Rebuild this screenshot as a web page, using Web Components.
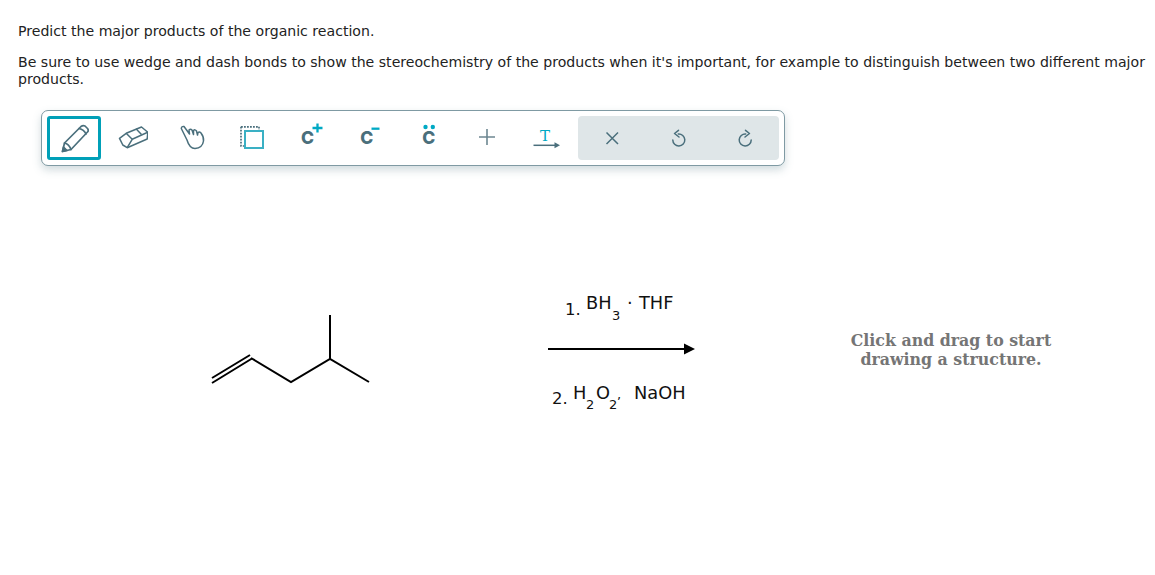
<!DOCTYPE html>
<html>
<head>
<meta charset="utf-8">
<style>
    html, body { margin: 0; background: #fff; }
    body { width: 1155px; height: 575px; overflow: hidden; font-family: "DejaVu Sans", Verdana, sans-serif; }
</style>
</head>
<body>
<question-page>
    <question-prompt>
        <p>Predict the major products of the organic reaction.</p>
        <p>Be sure to use wedge and dash bonds to show the stereochemistry of the products when it's important, for example to distinguish between two different major products.</p>
    </question-prompt>
    <sketch-toolbar>
        <tool-button slot="tools" selected>
            <svg width="30" height="30" viewBox="0 0 30 30" fill="none" stroke="#4a6f7c" stroke-width="1.7" stroke-linejoin="round" stroke-linecap="round">
                <path d="M3.500 28.500 L5.500 20 L22 3.500 Q24 2 26 3 L28.500 5.500 Q30 7.500 28.500 9 L12 26.500 Z"/>
                <path d="M5.500 20 Q10 21 12 26.500"/><path d="M20 5.500 Q25 6.500 27 11"/>
                <path d="M3.500 28.500 L4.500 24 L8 27.500 Z" fill="#4a6f7c"/>
            </svg>
        </tool-button>
        <tool-button slot="tools">
            <svg width="30" height="30" viewBox="0 0 30 30" fill="none" stroke="#4a6f7c" stroke-width="1.500" stroke-linejoin="round">
                <path d="M1.500 15.300 L8.200 10.300 L23.500 4 L29.800 9.300 L29.200 16 L9.200 24.700 L4.800 22 Z"/>
                <path d="M8.200 10.300 L14.200 16.300 L9.200 24.700"/><path d="M14.200 16.300 L29.800 9.300"/>
                <path d="M18 5.800 L23.500 11.500"/>
            </svg>
        </tool-button>
        <tool-button slot="tools">
            <svg width="30" height="30" viewBox="0 0 30 30" fill="none" stroke="#4a6f7c" stroke-width="1.500" stroke-linejoin="round" stroke-linecap="round">
                <path d="M10 17 L4.300 5.500 Q4.500 3 7 3.500 L12.500 11 L12 7 Q13.500 5.500 15 7 L16.500 11.500 L16.500 7.500 Q18 6 19.500 8 L20.500 12 L21 9.500 Q22.500 8.500 24 10 Q27 14 26.500 18 Q25.500 25 18 25.500 Q12.500 25.500 10 17 Z"/>
            </svg>
        </tool-button>
        <tool-button slot="tools">
            <svg width="30" height="30" viewBox="0 0 30 30" fill="none">
                <path d="M5 3.800 H23 V8 M5 3.800 V23 H9" stroke="#4a6f7c" stroke-width="1.700" stroke-dasharray="1.800 1.200"/>
                <rect x="9" y="8" width="18" height="17" stroke="#3ab0c4" stroke-width="2"/>
            </svg>
        </tool-button>
        <tool-button slot="tools"><atom-glyph charge="plus"></atom-glyph></tool-button>
        <tool-button slot="tools"><atom-glyph charge="minus"></atom-glyph></tool-button>
        <tool-button slot="tools"><atom-glyph charge="pair"></atom-glyph></tool-button>
        <tool-button slot="tools">
            <svg width="30" height="30" viewBox="0 0 30 30" fill="none" stroke="#6d8791" stroke-width="1.600"><path d="M15 6 V22 M7 14 H23"/></svg>
        </tool-button>
        <tool-button slot="tools">
            <svg width="30" height="30" viewBox="0 0 30 30" fill="none">
                <text x="14" y="18" text-anchor="middle" font-family="'DejaVu Serif', serif" font-size="15" fill="#00a9c4">T</text>
                <path d="M2.500 22.300 H25" stroke="#4a6f7c" stroke-width="1.500"/>
                <path d="M23.500 19.300 L29 22.300 L23.500 25.300 Z" fill="#4a6f7c"/>
            </svg>
        </tool-button>
        <tool-button slot="actions">
            <svg width="30" height="30" viewBox="0 0 30 30" fill="none" stroke="#4a6f7c" stroke-width="1.500"><path d="M9.500 9.500 L21 21 M21 9.500 L9.500 21"/></svg>
        </tool-button>
        <tool-button slot="actions">
            <svg width="30" height="30" viewBox="0 0 30 30" fill="none" stroke="#4a6f7c" stroke-width="1.500" stroke-linecap="round" stroke-linejoin="round"><path d="M15.300 11 A6 6 0 1 1 9.800 17"/><path d="M15.500 7.300 L11.500 10.500 L16 14"/></svg>
        </tool-button>
        <tool-button slot="actions">
            <svg width="30" height="30" viewBox="0 0 30 30" fill="none" stroke="#4a6f7c" stroke-width="1.500" stroke-linecap="round" stroke-linejoin="round"><path d="M15.700 11 A6 6 0 1 0 21.200 17"/><path d="M15.500 7.300 L19.500 10.500 L15 14"/></svg>
        </tool-button>
    </sketch-toolbar>
    <reaction-canvas></reaction-canvas>
</question-page>

<script>
class QuestionPage extends HTMLElement {
    constructor() {
        super();
        this.attachShadow({ mode: 'open' });
    }

    connectedCallback() {
        this.shadowRoot.innerHTML = `
            <style>
                :host {
                    display: flex;
                    flex-direction: column;
                    color: #1f2a30;
                }
            </style>
            <slot></slot>
        `;
    }
}

class QuestionPrompt extends HTMLElement {
    constructor() {
        super();
        this.attachShadow({ mode: 'open' });
    }

    connectedCallback() {
        this.shadowRoot.innerHTML = `
            <style>
                :host {
                    display: block;
                    padding: 23px 0 0 18px;
                    width: 1130px;
                    font-size: 14.1px;
                    line-height: 17px;
                    color: #222;
                }
                ::slotted(p) {
                    margin: 0 0 14px 0;
                }
            </style>
            <slot></slot>
        `;
    }
}

class SketchToolbar extends HTMLElement {
    constructor() {
        super();
        this.attachShadow({ mode: 'open' });
    }

    connectedCallback() {
        this.shadowRoot.innerHTML = `
            <style>
                :host {
                    display: flex;
                    box-sizing: border-box;
                    width: 744px;
                    height: 56px;
                    margin: 8px 0 0 41px;
                    padding: 5px;
                    background: #fff;
                    border: 1px solid #7f9aa3;
                    border-radius: 7px;
                    box-shadow: 0 4px 8px rgba(90, 125, 135, 0.28);
                    justify-content: space-between;
                }
                .tools { display: flex; }
                .actions {
                    display: flex;
                    background: #dfe6e8;
                    border-radius: 4px;
                    width: 201px;
                    justify-content: space-around;
                    padding: 0 0.5px;
                    box-sizing: border-box;
                }
            </style>
            <div class="tools"><slot name="tools"></slot></div>
            <div class="actions"><slot name="actions"></slot></div>
        `;
    }
}

class ToolButton extends HTMLElement {
    constructor() {
        super();
        this.attachShadow({ mode: 'open' });
    }

    connectedCallback() {
        this.shadowRoot.innerHTML = `
            <style>
                :host {
                    display: flex;
                    align-items: center;
                    justify-content: center;
                    box-sizing: border-box;
                    width: 59px;
                    height: 44px;
                }
                :host([selected]) {
                    width: 54px;
                    margin-right: 2px;
                    border: 3px solid #00a0b8;
                    border-radius: 3px;
                }
                :host([slot="actions"]) {
                    width: 66px;
                }
                svg { display: block; }
            </style>
            <slot></slot>
        `;
    }
}

class AtomGlyph extends HTMLElement {
    constructor() {
        super();
        this.attachShadow({ mode: 'open' });
    }

    connectedCallback() {
        const charge = this.getAttribute('charge');
        const marks = {
            plus: '<path d="M17.500 5 H27.500 M22.500 0.500 V9.500" stroke="#00a9c4" stroke-width="2.300"/>',
            minus: '<path d="M17.500 5.700 H25.500" stroke="#00a9c4" stroke-width="2.300"/>',
            pair: '<circle cx="12.500" cy="4" r="2.200" fill="#00a9c4"/><circle cx="19.800" cy="4" r="2.200" fill="#00a9c4"/>'
        };
        const x = { plus: 12.4, minus: 12.7, pair: 15.8 }[charge];
        this.shadowRoot.innerHTML = `
            <style>
                :host { display: block; width: 30px; height: 30px; }
                svg { display: block; }
                text { font-family: Inter, "DejaVu Sans", sans-serif; font-weight: 800; font-size: 17.500px; fill: #4a6f7c; }
            </style>
            <svg width="30" height="30" viewBox="0 0 30 30" fill="none">
                <text x="${x}" y="21" text-anchor="middle">C</text>
                ${marks[charge]}
            </svg>
        `;
    }
}

class ReactionCanvas extends HTMLElement {
    constructor() {
        super();
        this.attachShadow({ mode: 'open' });
    }

    connectedCallback() {
        this.shadowRoot.innerHTML = `
            <style>
                :host {
                    display: block;
                    position: relative;
                    width: 1155px;
                    height: 409px;
                }
                svg { position: absolute; left: 0; top: 0; }
                text { font-family: "DejaVu Sans", Verdana, sans-serif; fill: #111; }
                .hint {
                    position: absolute;
                    left: 820px;
                    top: 165px;
                    width: 262px;
                    text-align: center;
                    font-family: "DejaVu Serif", "DejaVu Sans", serif;
                    font-weight: bold;
                    font-size: 15.800px;
                    line-height: 19px;
                    color: #757575;
                }
            </style>
            <svg width="1155" height="409" viewBox="0 166 1155 409" fill="none">
                <g stroke="#000" stroke-width="2">
                    <path d="M212 383 L252 358.500 M212 378 L250 355"/>
                    <path d="M251 358 L291 382 L330 359 L369 382 M330 359 V315"/>
                    <path d="M548 349 H685"/>
                </g>
                <path d="M684 343.500 L695 349 L684 354.500 Z" fill="#000"/>
                <text x="565" y="315" font-size="16.500">1.</text>
                <text x="586" y="309" font-size="17.800">BH</text>
                <text x="612" y="320" font-size="13">3</text>
                <text x="627" y="309" font-size="17.800">·</text>
                <text x="639" y="309" font-size="17.800">THF</text>
                <text x="552" y="404" font-size="16.500">2.</text>
                <text x="573" y="399" font-size="17.800">H</text>
                <text x="586" y="409" font-size="13">2</text>
                <text x="596" y="399" font-size="17.800">O</text>
                <text x="609" y="409" font-size="13">2</text>
                <text x="617" y="399" font-size="13">,</text>
                <text x="634" y="399" font-size="17.800">NaOH</text>
            </svg>
            <div class="hint">Click and drag to start<br>drawing a structure.</div>
        `;
    }
}

customElements.define('question-page', QuestionPage);
customElements.define('question-prompt', QuestionPrompt);
customElements.define('sketch-toolbar', SketchToolbar);
customElements.define('tool-button', ToolButton);
customElements.define('atom-glyph', AtomGlyph);
customElements.define('reaction-canvas', ReactionCanvas);
</script>
</body>
</html>
